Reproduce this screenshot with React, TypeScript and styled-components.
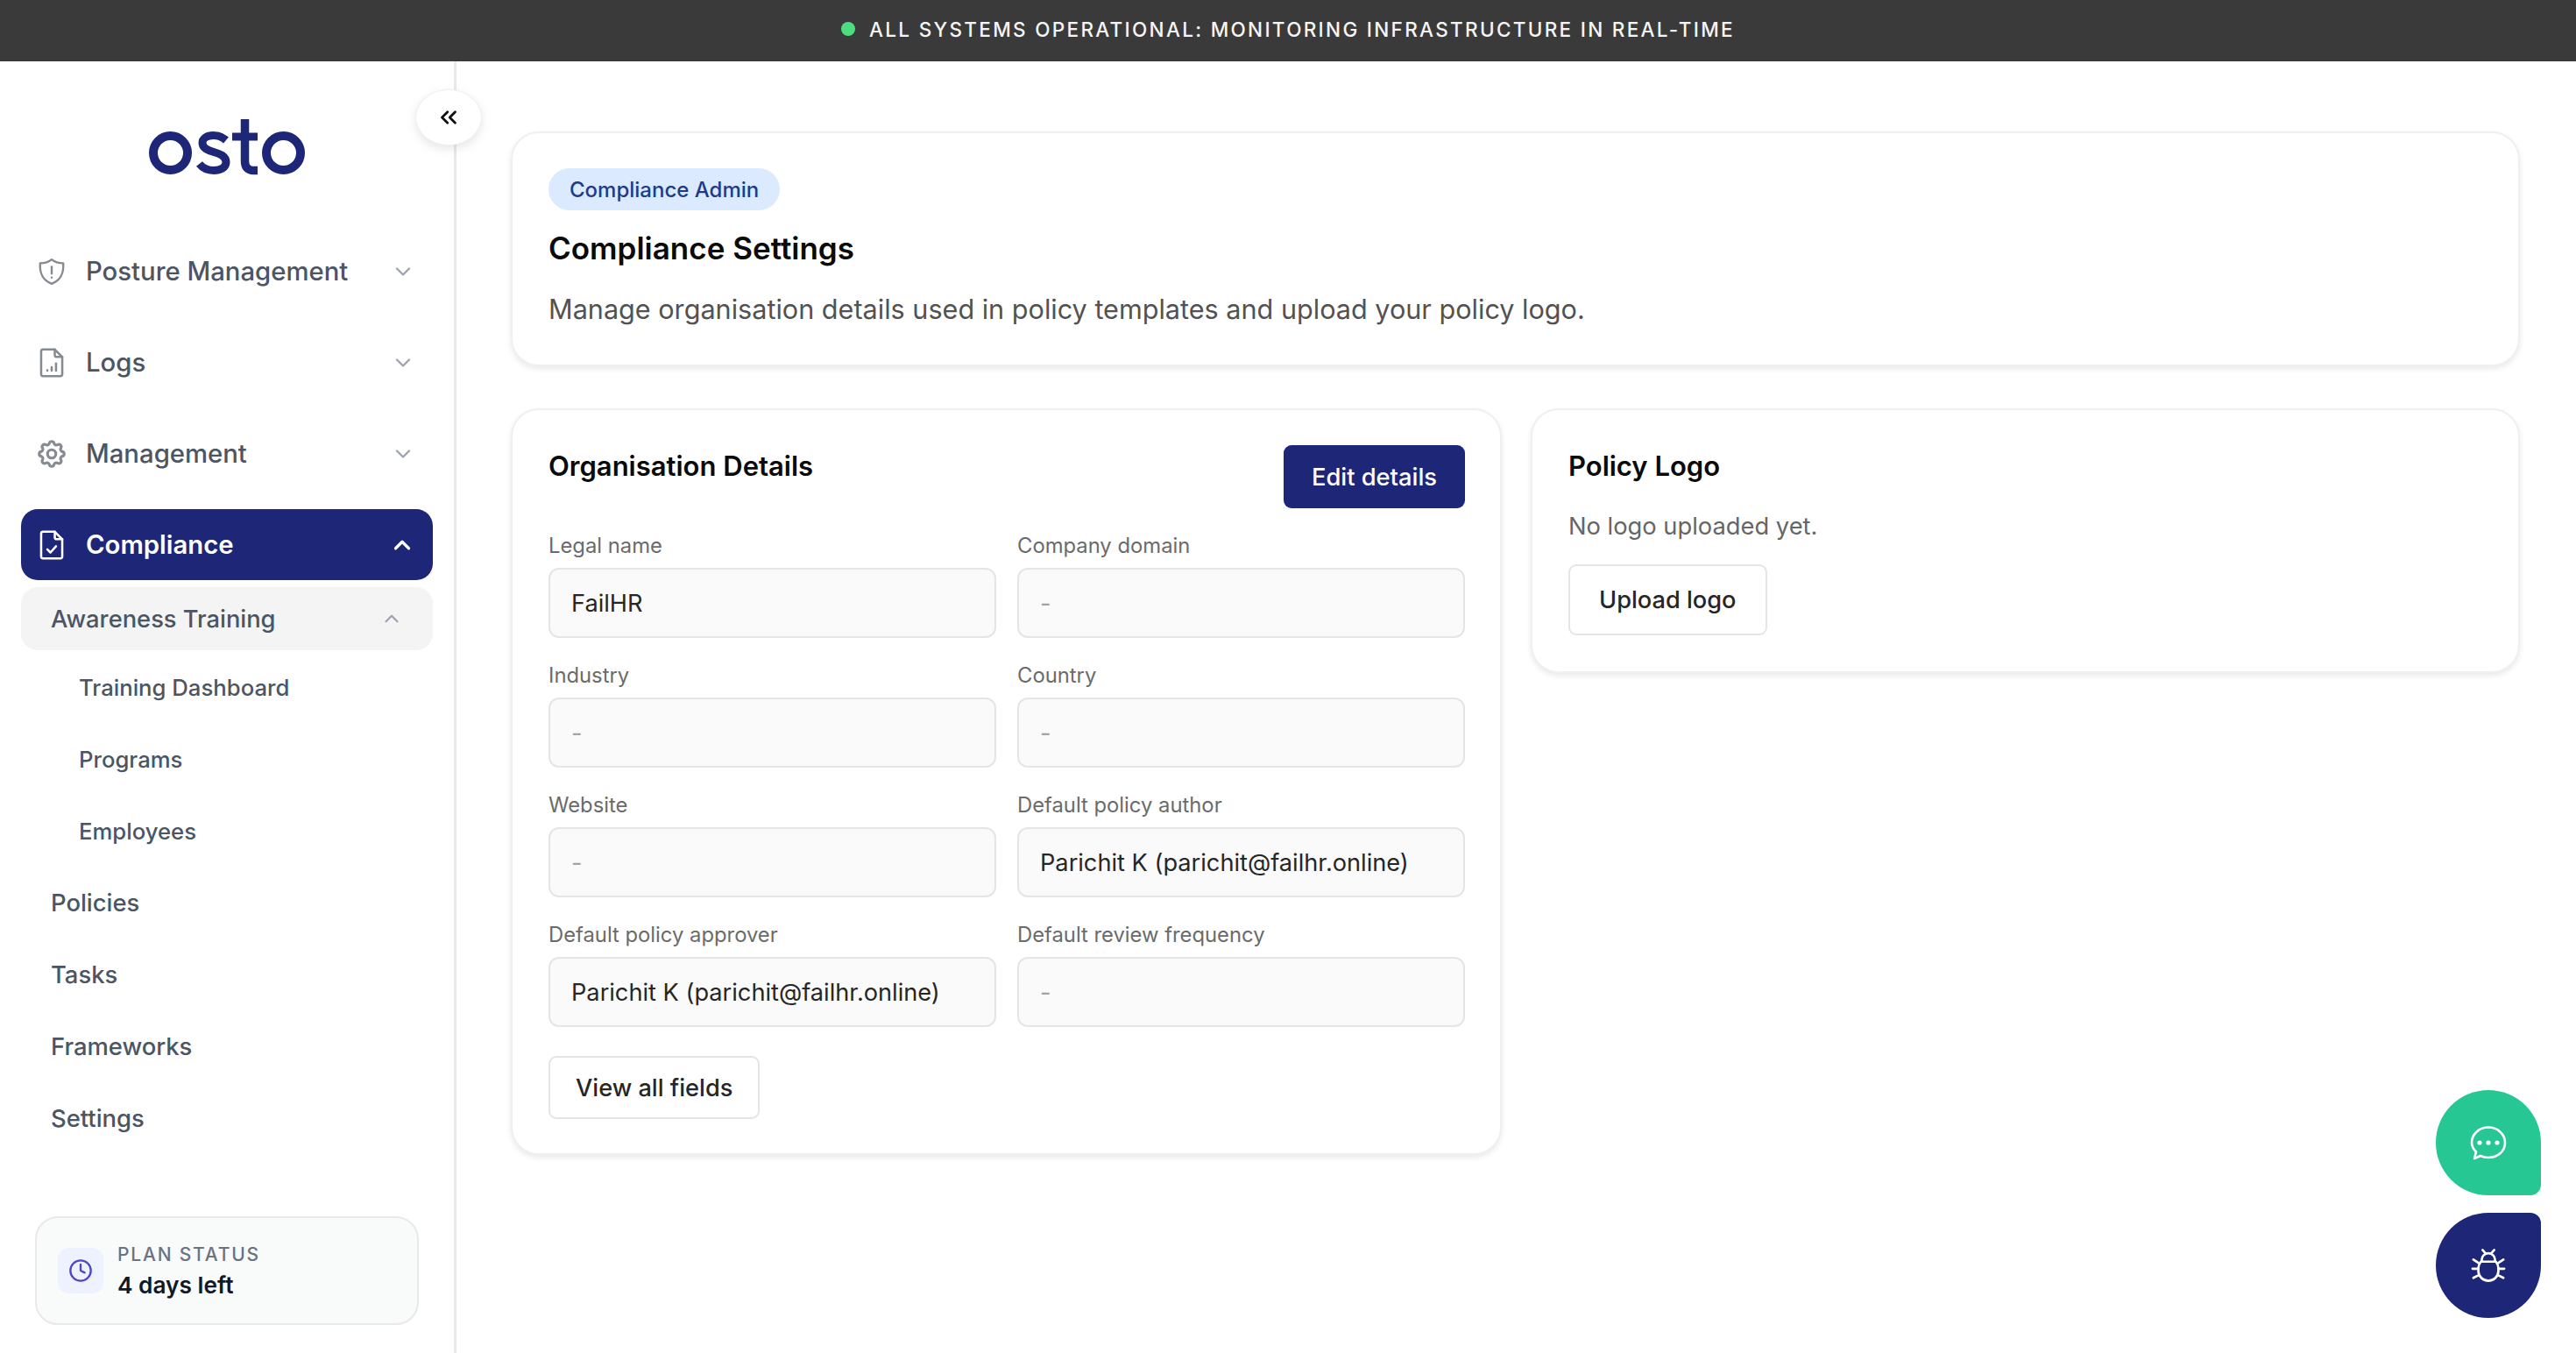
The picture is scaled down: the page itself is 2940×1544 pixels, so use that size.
import React from 'react';
import styled, { createGlobalStyle } from 'styled-components';
import { ChevronDown, ChevronUp, ChevronsLeft, Clock } from 'lucide-react';
import { TbSettings } from 'react-icons/tb';

const RootGlobalStyle = createGlobalStyle`
  html, body {
    margin: 0;
    padding: 0;
    background: #ffffff;
  }
  * {
    box-sizing: border-box;
  }
`;

const Page = styled.div`
  display: flex;
  flex-direction: column;
  width: 100vw;
  height: 100vh;
  overflow: hidden;
  font-family: Inter, "Liberation Sans", sans-serif;
`;

const StatusBar = styled.div`
  flex: 0 0 70px;
  display: flex;
  align-items: center;
  justify-content: center;
  gap: 16px;
  background: #3a3a3a;
  color: #f5f5f5;
  font-size: 22.5px;
  font-weight: 500;
  letter-spacing: 2.31px;
  padding-bottom: 4px;
`;

const StatusDot = styled.span`
  width: 16px;
  height: 16px;
  border-radius: 50%;
  background: #4ade80;
`;

const Body = styled.div`
  flex: 1;
  display: flex;
  min-height: 0;
`;

const Sidebar = styled.aside`
  position: relative;
  flex: 0 0 521px;
  display: flex;
  flex-direction: column;
  padding: 66px 24px 32px;
  border-right: 3px solid #e8e9eb;
`;

const CollapseButton = styled.button`
  position: absolute;
  top: 32px;
  right: -32px;
  width: 76px;
  height: 64px;
  display: flex;
  align-items: center;
  justify-content: center;
  padding: 0;
  border: 1px solid #efefef;
  border-radius: 50%;
  background: #ffffff;
  color: #111111;
  box-shadow: 0 4px 12px rgba(0, 0, 0, 0.1);
`;

const LogoWrap = styled.div`
  display: flex;
  justify-content: center;
  margin-bottom: 69px;
`;

const NavList = styled.nav`
  display: flex;
  flex-direction: column;
  gap: 23px;
`;

const NavRow = styled.div<{ $active?: boolean }>`
  height: 81px;
  display: flex;
  align-items: center;
  gap: 22px;
  padding: 0 20px 0 18px;
  border-radius: 19px;
  background: ${(p) => (p.$active ? '#1e2678' : 'transparent')};
  color: ${(p) => (p.$active ? '#ffffff' : '#4b5563')};
  font-size: 29.3px;
  font-weight: ${(p) => (p.$active ? 600 : 500)};
`;

const NavLabel = styled.span`
  flex: 1;
`;

const ChevronSlot = styled.span<{ $active?: boolean }>`
  display: flex;
  color: ${(p) => (p.$active ? '#ffffff' : '#9ca3af')};
`;

const SubList = styled.div`
  display: flex;
  flex-direction: column;
  margin-top: -15px;
`;

const AwarenessRow = styled.div`
  height: 72px;
  display: flex;
  align-items: center;
  justify-content: space-between;
  padding: 0 34px 0 34px;
  border-radius: 19px;
  background: #f4f4f5;
  color: #4b5563;
  font-size: 27.3px;
  font-weight: 500;
  margin-bottom: 1px;
`;

const SubItem = styled.div<{ $nested?: boolean }>`
  height: 82px;
  display: flex;
  align-items: center;
  padding-left: ${(p) => (p.$nested ? '66px' : '34px')};
  color: #4b5563;
  font-size: ${(p) => (p.$nested ? '25.7px' : '27.4px')};
  font-weight: 500;
`;

const PlanCard = styled.div`
  margin: auto 16px 0;
  height: 124px;
  display: flex;
  align-items: center;
  gap: 16px;
  padding: 0 24px;
  border: 2px solid #e8e9eb;
  border-radius: 26px;
  background: #f9fafa;
`;

const PlanIcon = styled.div`
  width: 52px;
  height: 52px;
  display: flex;
  align-items: center;
  justify-content: center;
  border-radius: 13px;
  background: #eef2ff;
  color: #4f46c8;
`;

const PlanText = styled.div`
  display: flex;
  flex-direction: column;
  gap: 7px;
`;

const PlanLabel = styled.span`
  color: #6b7280;
  font-size: 21px;
  font-weight: 500;
  letter-spacing: 1.8px;
  text-transform: uppercase;
`;

const PlanValue = styled.span`
  color: #111827;
  font-size: 26.25px;
  font-weight: 600;
`;

const Main = styled.main`
  flex: 1;
  display: flex;
  flex-direction: column;
  gap: 48px;
  padding: 80px 64px 0 62px;
`;

const Card = styled.section`
  padding: 40px 40px 39px 41px;
  background: #ffffff;
  border: 2px solid #eff0f1;
  border-radius: 32px;
  box-shadow: 0 3px 6px rgba(0, 0, 0, 0.09);
`;

const Badge = styled.span`
  display: inline-flex;
  align-items: center;
  height: 48px;
  padding: 0 24px;
  border-radius: 24px;
  background: #dbeafe;
  color: #1e3a8a;
  font-size: 24px;
  font-weight: 500;
`;

const PageTitle = styled.h1`
  margin: 18px 0 0;
  color: #0a0a0a;
  font-size: 35px;
  line-height: 50px;
  font-weight: 600;
`;

const Description = styled.p`
  margin: 21px 0 0;
  color: #525252;
  font-size: 30.6px;
  line-height: 48px;
`;

const Columns = styled.div`
  display: grid;
  grid-template-columns: 1131px 1129px;
  gap: 33px;
  align-items: start;
`;

const CardHead = styled.div`
  display: flex;
  align-items: flex-start;
  justify-content: space-between;
`;

const CardTitle = styled.h2`
  margin: 1px 0 0;
  color: #0a0a0a;
  font-size: 31px;
  line-height: 46px;
  font-weight: 600;
`;

const PrimaryButton = styled.button`
  height: 72px;
  padding: 0 32px;
  border: none;
  border-radius: 9px;
  background: #1e2678;
  color: #ffffff;
  font: 500 27.3px Inter, "Liberation Sans", sans-serif;
`;

const FieldGrid = styled.div`
  display: grid;
  grid-template-columns: 1fr 1fr;
  gap: 26px 24px;
  margin-top: 26px;
`;

const Field = styled.div`
  display: flex;
  flex-direction: column;
  gap: 8px;
`;

const FieldLabel = styled.label`
  color: #6b6b6b;
  font-size: 23.8px;
  line-height: 34px;
`;

const FieldValue = styled.div<{ $empty?: boolean }>`
  height: 80px;
  display: flex;
  align-items: center;
  padding: 0 24px;
  border: 2px solid #e5e5e5;
  border-radius: 12px;
  background: #fafafa;
  color: ${(p) => (p.$empty ? '#a3a3a3' : '#262626')};
  font-size: 27.2px;
`;

const OutlineButton = styled.button<{ $tall?: boolean }>`
  display: block;
  height: ${(p) => (p.$tall ? '81px' : '72px')};
  margin-bottom: ${(p) => (p.$tall ? '2px' : '0')};
  padding: 0 ${(p) => (p.$tall ? '33px' : '29px')};
  border: 2px solid #e5e5e5;
  border-radius: 9px;
  background: #ffffff;
  color: #262626;
  font: 500 27.2px Inter, "Liberation Sans", sans-serif;
`;

const ViewAllWrap = styled.div`
  margin-top: 33px;
`;

const NoLogo = styled.p`
  margin: 26px 0 23px;
  color: #666666;
  font-size: 27.3px;
  line-height: 40px;
`;

const FloatButton = styled.button<{ $kind: 'chat' | 'bug' }>`
  position: fixed;
  right: 40px;
  bottom: ${(p) => (p.$kind === 'chat' ? '180px' : '40px')};
  width: 120px;
  height: 120px;
  display: flex;
  align-items: center;
  justify-content: center;
  padding: ${(p) => (p.$kind === 'chat' ? '2px 0 0' : '0')};
  border: none;
  border-radius: ${(p) => (p.$kind === 'chat' ? '50% 50% 12px 50%' : '50% 12px 50% 50%')};
  background: ${(p) => (p.$kind === 'chat' ? '#27c794' : '#1e2678')};
  color: #ffffff;
`;

// logo mark, stroked by hand to follow the wordmark shape
const OstoLogo = () => (
  <svg width="180" height="64" viewBox="0 0 180 64" fill="none" stroke="#1e2678" strokeWidth="10">
    <circle cx="25.5" cy="38.5" r="19.5" />
    <path
      d="M89 24C85 20.500 80 18.500 74.500 18.500C67 18.500 62 22 62 27C62 33 68 35.500 75 37.500C83 39.800 89 42.500 89 49C89 55 83 58.500 75 58.500C68 58.500 62.500 56 58.500 51"
      strokeWidth="9"
    />
    <path d="M110.500 0V48C110.500 55 114 58.500 120 58.500H125" strokeWidth="9.500" />
    <path d="M96 20H125" strokeWidth="9" />
    <circle cx="154.500" cy="38.500" r="19.500" />
  </svg>
);

const ShieldIcon = () => (
  <svg width="34" height="34" viewBox="0 0 24 24" fill="none" stroke="#868b92" strokeWidth="1.7" strokeLinecap="round" strokeLinejoin="round">
    <path d="M12 2.200c2.500 2 5.500 3 9.300 3 .5 7.800-1.500 13.500-9.300 16.600C4.200 18.700 2.200 13 2.700 5.200c3.800 0 6.800-1 9.300-3z" />
    <path d="M12 8v5.500" />
    <path d="M12 16.800v.01" />
  </svg>
);

const FileIcon = ({ color, children }: { color: string; children: React.ReactNode }) => (
  <svg width="34" height="34" viewBox="0 0 24 24" fill="none" stroke={color} strokeWidth="1.8" strokeLinecap="round" strokeLinejoin="round">
    <path d="M14.500 1.300H5a1.500 1.500 0 0 0-1.500 1.500v18.400A1.500 1.500 0 0 0 5 22.700h14a1.500 1.500 0 0 0 1.500-1.500V7.300z" />
    <path d="M14.500 1.300v4.500a1.500 1.500 0 0 0 1.500 1.500h4.500" />
    {children}
  </svg>
);

const ChatIcon = () => (
  <svg width="42" height="42" viewBox="0 0 42 42" fill="none" stroke="#ffffff" strokeWidth="2.600" strokeLinecap="round" strokeLinejoin="round">
    <path d="M5 38l2-7.500C4 27.500 2 24 2 20 2 10.500 10 2.500 21 2.500s19 8 19 17.500-8 17-19 17c-3.500 0-6.500-.7-9-2z" />
    <circle cx="11" cy="20" r="1.300" fill="#ffffff" />
    <circle cx="21" cy="20" r="1.300" fill="#ffffff" />
    <circle cx="31" cy="20" r="1.300" fill="#ffffff" />
  </svg>
);

const BugIcon = () => (
  <svg width="40" height="40" viewBox="0 0 42 42" fill="none" stroke="#ffffff" strokeWidth="2.800" strokeLinecap="round" strokeLinejoin="round">
    <path d="M13 16.500v-2a8 8 0 0 1 16 0v2" />
    <path d="M12 16.500h18c2 2.500 3 5 3 8v3a12 12 0 0 1-24 0v-3c0-3 1-5.500 3-8z" />
    <path d="M14 2.500l3.500 4" />
    <path d="M28 2.500l-3.500 4" />
    <path d="M3 14l6 4" />
    <path d="M39 14l-6 4" />
    <path d="M2 25h7" />
    <path d="M40 25h-7" />
    <path d="M3 36l6-3" />
    <path d="M39 36l-6-3" />
  </svg>
);

const GearIcon = styled(TbSettings)`
  flex: none;
  margin: 0 -2px;
  color: #868b92;
`;

const topNav = [
  { label: 'Posture Management', icon: <ShieldIcon /> },
  {
    label: 'Logs',
    icon: (
      <FileIcon color="#868b92">
        <path d="M8.500 18v.3" />
        <path d="M12 15.500v2.800" />
        <path d="M15.500 12.500v5.800" />
      </FileIcon>
    ),
  },
  { label: 'Management', icon: <GearIcon size={38} /> },
];

const orgFields = [
  { label: 'Legal name', value: 'FailHR' },
  { label: 'Company domain', value: '' },
  { label: 'Industry', value: '' },
  { label: 'Country', value: '' },
  { label: 'Website', value: '' },
  { label: 'Default policy author', value: 'Parichit K (parichit@failhr.online)' },
  { label: 'Default policy approver', value: 'Parichit K (parichit@failhr.online)' },
  { label: 'Default review frequency', value: '' },
];

const App = () => {
  return (
    <Page>
      <RootGlobalStyle />
      <StatusBar>
        <StatusDot />
        ALL SYSTEMS OPERATIONAL: MONITORING INFRASTRUCTURE IN REAL-TIME
      </StatusBar>
      <Body>
        <Sidebar>
          <CollapseButton>
            <ChevronsLeft size={30} strokeWidth={2.2} />
          </CollapseButton>
          <LogoWrap>
            <OstoLogo />
          </LogoWrap>
          <NavList>
            {topNav.map((item) => (
              <NavRow key={item.label}>
                {item.icon}
                <NavLabel>{item.label}</NavLabel>
                <ChevronSlot>
                  <ChevronDown size={28} strokeWidth={2} />
                </ChevronSlot>
              </NavRow>
            ))}
            <NavRow $active>
              <FileIcon color="#ffffff">
                <path d="M8.500 15.500l2.500 2.500 4.500-5" />
              </FileIcon>
              <NavLabel>Compliance</NavLabel>
              <ChevronSlot $active>
                <ChevronUp size={30} strokeWidth={2.6} />
              </ChevronSlot>
            </NavRow>
            <SubList>
              <AwarenessRow>
                Awareness Training
                <ChevronSlot>
                  <ChevronUp size={26} strokeWidth={2} />
                </ChevronSlot>
              </AwarenessRow>
              <SubItem $nested>Training Dashboard</SubItem>
              <SubItem $nested>Programs</SubItem>
              <SubItem $nested>Employees</SubItem>
              <SubItem>Policies</SubItem>
              <SubItem>Tasks</SubItem>
              <SubItem>Frameworks</SubItem>
              <SubItem>Settings</SubItem>
            </SubList>
          </NavList>
          <PlanCard>
            <PlanIcon>
              <Clock size={28} strokeWidth={2} />
            </PlanIcon>
            <PlanText>
              <PlanLabel>Plan status</PlanLabel>
              <PlanValue>4 days left</PlanValue>
            </PlanText>
          </PlanCard>
        </Sidebar>
        <Main>
          <Card>
            <Badge>Compliance Admin</Badge>
            <PageTitle>Compliance Settings</PageTitle>
            <Description>Manage organisation details used in policy templates and upload your policy logo.</Description>
          </Card>
          <Columns>
            <Card>
              <CardHead>
                <CardTitle>Organisation Details</CardTitle>
                <PrimaryButton>Edit details</PrimaryButton>
              </CardHead>
              <FieldGrid>
                {orgFields.map((field) => (
                  <Field key={field.label}>
                    <FieldLabel>{field.label}</FieldLabel>
                    <FieldValue $empty={!field.value}>{field.value || '-'}</FieldValue>
                  </Field>
                ))}
              </FieldGrid>
              <ViewAllWrap>
                <OutlineButton>View all fields</OutlineButton>
              </ViewAllWrap>
            </Card>
            <Card>
              <CardTitle>Policy Logo</CardTitle>
              <NoLogo>No logo uploaded yet.</NoLogo>
              <OutlineButton $tall>Upload logo</OutlineButton>
            </Card>
          </Columns>
        </Main>
      </Body>
      <FloatButton $kind="chat">
        <ChatIcon />
      </FloatButton>
      <FloatButton $kind="bug">
        <BugIcon />
      </FloatButton>
    </Page>
  );
};

export default App;
